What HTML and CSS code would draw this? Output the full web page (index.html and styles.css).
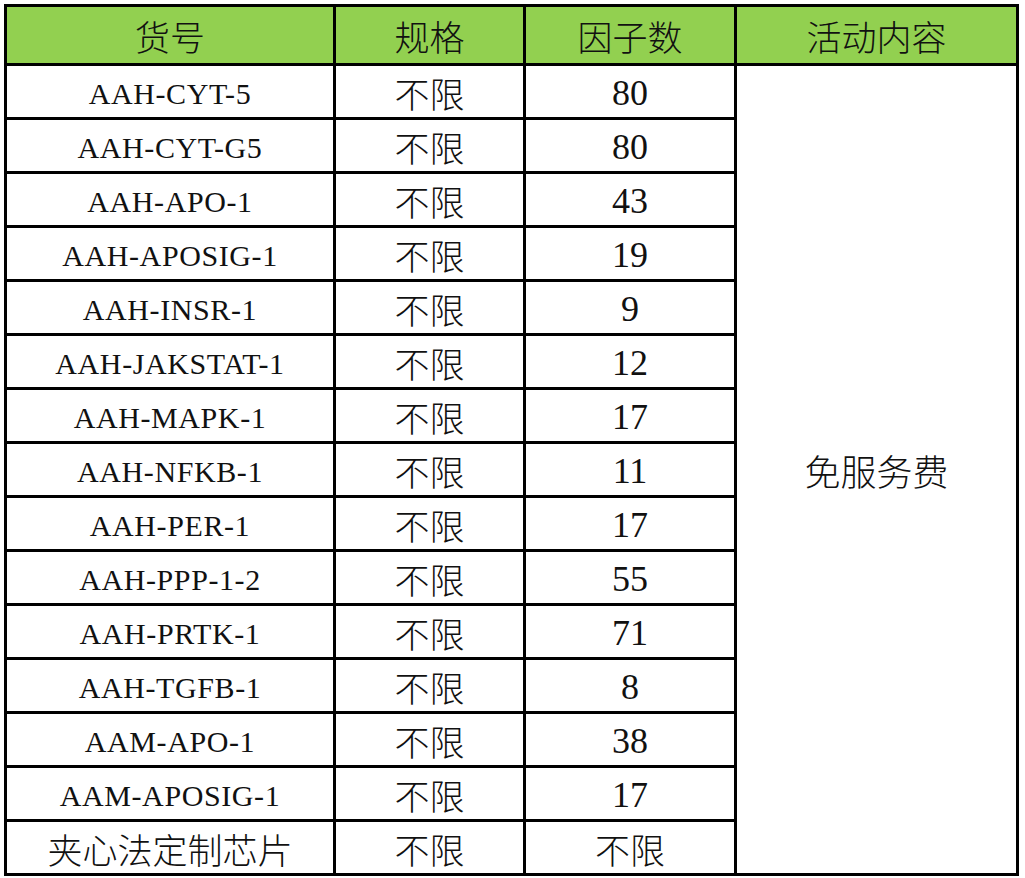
FILE: index.html
```html
<!DOCTYPE html>
<html lang="zh-CN">
<head>
<meta charset="utf-8">
<title>活动内容</title>
<link rel="stylesheet" href="styles.css">
</head>
<body>
<div class="sheet">
  <div class="cell head">货号</div>
  <div class="cell head">规格</div>
  <div class="cell head">因子数</div>
  <div class="cell head">活动内容</div>

  <div class="cell code">AAH-CYT-5</div><div class="cell cjk">不限</div><div class="cell num">80</div>
  <div class="cell cjk merged">免服务费</div>
  <div class="cell code">AAH-CYT-G5</div><div class="cell cjk">不限</div><div class="cell num">80</div>
  <div class="cell code">AAH-APO-1</div><div class="cell cjk">不限</div><div class="cell num">43</div>
  <div class="cell code">AAH-APOSIG-1</div><div class="cell cjk">不限</div><div class="cell num">19</div>
  <div class="cell code">AAH-INSR-1</div><div class="cell cjk">不限</div><div class="cell num">9</div>
  <div class="cell code">AAH-JAKSTAT-1</div><div class="cell cjk">不限</div><div class="cell num">12</div>
  <div class="cell code">AAH-MAPK-1</div><div class="cell cjk">不限</div><div class="cell num">17</div>
  <div class="cell code">AAH-NFKB-1</div><div class="cell cjk">不限</div><div class="cell num">11</div>
  <div class="cell code">AAH-PER-1</div><div class="cell cjk">不限</div><div class="cell num">17</div>
  <div class="cell code">AAH-PPP-1-2</div><div class="cell cjk">不限</div><div class="cell num">55</div>
  <div class="cell code">AAH-PRTK-1</div><div class="cell cjk">不限</div><div class="cell num">71</div>
  <div class="cell code">AAH-TGFB-1</div><div class="cell cjk">不限</div><div class="cell num">8</div>
  <div class="cell code">AAM-APO-1</div><div class="cell cjk">不限</div><div class="cell num">38</div>
  <div class="cell code">AAM-APOSIG-1</div><div class="cell cjk">不限</div><div class="cell num">17</div>
  <div class="cell cjk">夹心法定制芯片</div><div class="cell cjk">不限</div><div class="cell cjk">不限</div>
</div>
</body>
</html>
```

FILE: styles.css
```css
html, body {
  margin: 0;
  padding: 0;
  background: #ffffff;
}

.sheet {
  margin: 4px 0 0 4px;
  width: 1012px;
  display: grid;
  grid-template-columns: 329px 190px 211px 282px;
  grid-template-rows: 59px repeat(15, 54px);
  border-left: 3px solid #000;
  border-top: 3px solid #000;
  box-sizing: content-box;
}

.cell {
  box-sizing: border-box;
  border-right: 3px solid #000;
  border-bottom: 3px solid #000;
  display: flex;
  align-items: center;
  justify-content: center;
  color: #111;
  white-space: nowrap;
  font-family: "Noto Sans CJK SC", sans-serif;
  font-weight: 300;
  font-size: 35px;
  line-height: 1;
}

.head {
  background: #92d050;
}

.code {
  font-family: "Liberation Serif", "Noto Sans CJK SC", serif;
  font-weight: 400;
  font-size: 30px;
  letter-spacing: 0.6px;
  padding-top: 4px;
}

.num {
  font-family: "Liberation Serif", serif;
  font-weight: 400;
  font-size: 36px;
  padding-top: 2px;
}

.cjk {
  padding-top: 1px;
}

.merged {
  grid-column: 4;
  grid-row: 2 / span 15;
  font-size: 36px;
}
```
